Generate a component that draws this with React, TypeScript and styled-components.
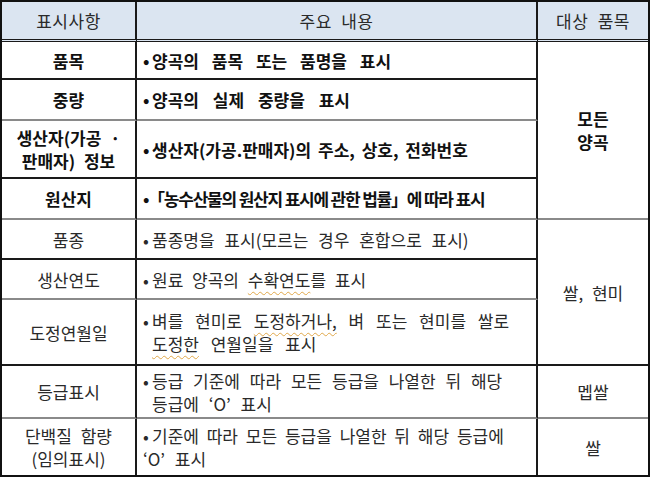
import React, { ReactNode } from 'react';
import styled, { createGlobalStyle, css } from 'styled-components';

type Line = 'black' | 'grey' | 'none';

interface RowData {
  label: string[];
  content: ReactNode[];
  bold?: boolean;
  line: Line;
}

const GlobalStyle = createGlobalStyle`
  html, body {
    margin: 0;
    padding: 0;
    background: #ffffff;
  }
  body {
    font-family: 'Malgun Gothic', 'Noto Sans CJK KR', 'Noto Sans', sans-serif;
    color: #111111;
  }
`;

const lineStyle = (line: Line) => {
  if (line === 'black') return css`border-bottom: 2px solid #1a1a1a;`;
  if (line === 'grey') return css`border-bottom: 2px solid #8a8a8a;`;
  return css`border-bottom: none;`;
};

const Sheet = styled.div`
  box-sizing: border-box;
  width: 650px;
  height: 477px;
  border: 2px solid #111111;
  display: grid;
  grid-template-columns: 135px 401px 1fr;
  grid-template-rows: 40px 38px 41px 58px 41px 40px 40px 66px 53px 1fr;
  font-size: 17px;
  line-height: 23px;
`;

const Cell = styled.div<{ $row: string; $col: number; $line: Line; $last?: boolean }>`
  box-sizing: border-box;
  grid-row: ${(p) => p.$row};
  grid-column: ${(p) => p.$col};
  display: flex;
  flex-direction: column;
  justify-content: center;
  border-right: ${(p) => (p.$last ? 'none' : '2px solid #1a1a1a')};
  ${(p) => lineStyle(p.$line)}
`;

const HeadCell = styled(Cell)`
  align-items: center;
  background: #dbe5f1;
  color: #2a2a2a;
  border-bottom: 3px double #1a1a1a;
  padding-bottom: 1px;
  letter-spacing: 0.5px;
  word-spacing: 5px;
`;

const LabelCell = styled(Cell)<{ $bold?: boolean }>`
  align-items: center;
  text-align: center;
  font-weight: ${(p) => (p.$bold ? 700 : 400)};
  color: ${(p) => (p.$bold ? '#111111' : '#2a2a2a')};
  word-spacing: 5px;
`;

const ContentCell = styled(Cell)<{ $bold?: boolean }>`
  padding-left: 6px;
  font-weight: ${(p) => (p.$bold ? 700 : 400)};
  color: ${(p) => (p.$bold ? '#111111' : '#2a2a2a')};
  white-space: nowrap;
`;

const TargetCell = styled(Cell)<{ $bold?: boolean }>`
  align-items: center;
  text-align: center;
  font-weight: ${(p) => (p.$bold ? 700 : 400)};
  color: ${(p) => (p.$bold ? '#111111' : '#2a2a2a')};
  word-spacing: 5px;
`;

const TextLine = styled.span<{ $indent?: boolean; $ls?: number; $ws?: number }>`
  display: block;
  padding-left: ${(p) => (p.$indent ? '9px' : '0')};
  letter-spacing: ${(p) => p.$ls ?? 0}px;
  word-spacing: ${(p) => p.$ws ?? 5}px;
`;

const Bullet = styled.span<{ $narrow?: boolean }>`
  display: inline-block;
  width: ${(p) => (p.$narrow ? '5px' : '9px')};
  letter-spacing: 0;
`;

const Marked = styled.span`
  text-decoration: underline wavy #e0a84a;
  text-decoration-thickness: 1px;
  text-underline-offset: 4px;
`;

const rows: RowData[] = [
  { label: ['품목'], bold: true, line: 'black', content: [<TextLine key="a" $ws={9}><Bullet>•</Bullet>양곡의 품목 또는 품명을 표시</TextLine>] },
  { label: ['중량'], bold: true, line: 'grey', content: [<TextLine key="a" $ws={10}><Bullet>•</Bullet>양곡의 실제 중량을 표시</TextLine>] },
  {
    label: ['생산자(가공 ·', '판매자) 정보'],
    bold: true,
    line: 'black',
    content: [<TextLine key="a" $ws={3}><Bullet>•</Bullet>생산자(가공.판매자)의 주소, 상호, 전화번호</TextLine>],
  },
  {
    label: ['원산지'],
    bold: true,
    line: 'grey',
    content: [<TextLine key="a" $ls={-1.2} $ws={0}><Bullet $narrow>•</Bullet>「농수산물의 원산지 표시에 관한 법률」에 따라 표시</TextLine>],
  },
  { label: ['품종'], line: 'black', content: [<TextLine key="a" $ws={6}><Bullet>•</Bullet>품종명을 표시(모르는 경우 혼합으로 표시)</TextLine>] },
  {
    label: ['생산연도'],
    line: 'grey',
    content: [<TextLine key="a" $ws={5}><Bullet>•</Bullet>원료 양곡의 <Marked>수확연도</Marked>를 표시</TextLine>],
  },
  {
    label: ['도정연월일'],
    line: 'black',
    content: [
      <TextLine key="a" $ws={8}><Bullet>•</Bullet>벼를 현미로 <Marked>도정하거나,</Marked> 벼 또는 현미를 쌀로</TextLine>,
      <TextLine key="b" $indent $ws={8}><Marked>도정한</Marked> 연월일을 표시</TextLine>,
    ],
  },
  {
    label: ['등급표시'],
    line: 'grey',
    content: [
      <TextLine key="a" $ws={6}><Bullet>•</Bullet>등급 기준에 따라 모든 등급을 나열한 뒤 해당</TextLine>,
      <TextLine key="b" $indent $ws={6}>등급에 ‘O’ 표시</TextLine>,
    ],
  },
  {
    label: ['단백질 함량', '(임의표시)'],
    line: 'none',
    content: [
      <TextLine key="a" $ws={4}><Bullet>•</Bullet>기준에 따라 모든 등급을 나열한 뒤 해당 등급에</TextLine>,
      <TextLine key="b" $ws={6}>‘O’ 표시</TextLine>,
    ],
  },
];

const App = () => {
  return (
    <>
      <GlobalStyle />
      <Sheet>
        <HeadCell $row="1" $col={1} $line="none">표시사항</HeadCell>
        <HeadCell $row="1" $col={2} $line="none">주요 내용</HeadCell>
        <HeadCell $row="1" $col={3} $line="none" $last>대상 품목</HeadCell>

        {rows.map((row, i) => (
          <React.Fragment key={row.label.join('')}>
            <LabelCell $row={String(i + 2)} $col={1} $line={row.line} $bold={row.bold}>
              {row.label.map((text) => (
                <TextLine key={text}>{text}</TextLine>
              ))}
            </LabelCell>
            <ContentCell $row={String(i + 2)} $col={2} $line={row.line} $bold={row.bold}>
              {row.content}
            </ContentCell>
          </React.Fragment>
        ))}

        <TargetCell $row="2 / 6" $col={3} $line="grey" $bold $last>
          <TextLine>모든</TextLine>
          <TextLine>양곡</TextLine>
        </TargetCell>
        <TargetCell $row="6 / 9" $col={3} $line="black" $last>
          쌀, 현미
        </TargetCell>
        <TargetCell $row="9" $col={3} $line="grey" $last>
          멥쌀
        </TargetCell>
        <TargetCell $row="10" $col={3} $line="none" $last>
          쌀
        </TargetCell>
      </Sheet>
    </>
  );
};

export default App;
